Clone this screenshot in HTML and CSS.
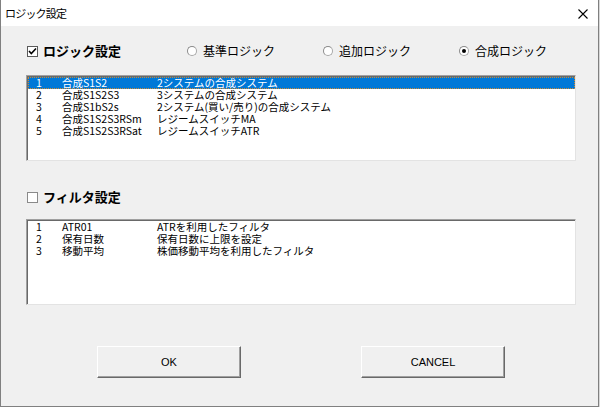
FILE: index.html
```html
<!DOCTYPE html>
<html lang="ja">
<head>
<meta charset="utf-8">
<title>ロジック設定</title>
<link rel="stylesheet" href="styles.css">
</head>
<body>
<div class="window">
  <div class="titlebar">
    <span class="title">ロジック設定</span>
    <span class="close">
      <svg width="10" height="10" viewBox="0 0 10 10"><path d="M0.5 0.5 L9.5 9.5 M9.5 0.5 L0.5 9.5" stroke="#000" stroke-width="1.1" fill="none"/></svg>
    </span>
  </div>
  <div class="content">
    <div class="header-row">
      <label class="check-label">
        <span class="checkbox checked">
          <svg width="9" height="9" viewBox="0 0 9 9"><path d="M1 4 L3.3 6.5 L8 1.5" stroke="#000" stroke-width="1.6" fill="none"/></svg>
        </span>
        <span class="section-title">ロジック設定</span>
      </label>
      <label class="radio-label"><span class="radio"></span><span>基準ロジック</span></label>
      <label class="radio-label"><span class="radio"></span><span>追加ロジック</span></label>
      <label class="radio-label"><span class="radio selected"></span><span>合成ロジック</span></label>
    </div>
    <div class="listbox logic-list">
      <div class="row selected"><span>1</span><span>合成S1S2</span><span>2システムの合成システム</span></div>
      <div class="row"><span>2</span><span>合成S1S2S3</span><span>3システムの合成システム</span></div>
      <div class="row"><span>3</span><span>合成S1bS2s</span><span>2システム(買い/売り)の合成システム</span></div>
      <div class="row"><span>4</span><span>合成S1S2S3RSm</span><span>レジームスイッチMA</span></div>
      <div class="row"><span>5</span><span>合成S1S2S3RSat</span><span>レジームスイッチATR</span></div>
    </div>
    <div class="header-row filter-row">
      <label class="check-label">
        <span class="checkbox"></span>
        <span class="section-title">フィルタ設定</span>
      </label>
    </div>
    <div class="listbox filter-list">
      <div class="row"><span>1</span><span>ATR01</span><span>ATRを利用したフィルタ</span></div>
      <div class="row"><span>2</span><span>保有日数</span><span>保有日数に上限を設定</span></div>
      <div class="row"><span>3</span><span>移動平均</span><span>株価移動平均を利用したフィルタ</span></div>
    </div>
    <div class="buttons">
      <button class="btn">OK</button>
      <button class="btn">CANCEL</button>
    </div>
  </div>
</div>
</body>
</html>
```
FILE: styles.css
```css
html, body {
  margin: 0;
  padding: 0;
}
body {
  width: 600px;
  height: 407px;
  background: #d8d8d8;
  font-family: "Noto Sans CJK JP", "Liberation Sans", sans-serif;
  color: #000;
  overflow: hidden;
}
.window {
  box-sizing: border-box;
  width: 599px;
  height: 407px;
  background: #f0f0f0;
  border: 1px solid #808080;
  border-top: none;
}
.titlebar {
  height: 26px;
  background: #fff;
  display: flex;
  align-items: center;
  padding-left: 4px;
}
.title {
  font-size: 11px;
  letter-spacing: -0.8px;
  line-height: 12px;
  margin-top: -1px;
}
.close {
  margin-left: auto;
  width: 10px;
  height: 10px;
  margin-right: 10px;
  margin-top: 1px;
  display: flex;
}
.content {
  padding-left: 25px;
}
.header-row {
  margin-top: 14px;
  height: 22px;
  display: grid;
  grid-template-columns: 160px 136px 136px 1fr;
  align-items: center;
  padding-left: 1px;
}
.check-label {
  display: flex;
  align-items: center;
  gap: 5px;
}
.checkbox {
  box-sizing: border-box;
  width: 11px;
  height: 11px;
  background: #fff;
  border: 1px solid #8a8a8a;
  display: flex;
  align-items: center;
  justify-content: center;
}
.checkbox.checked {
  border-color: #5a5a5a;
}
.section-title {
  font-size: 13px;
  font-weight: bold;
  line-height: 16px;
}
.radio-label {
  display: flex;
  align-items: center;
  gap: 6px;
  font-size: 12px;
  line-height: 16px;
}
.radio {
  box-sizing: border-box;
  width: 10px;
  height: 10px;
  border-radius: 50%;
  background: #fff;
  border: 1px solid #a8a8a8;
  border-top-color: #8a8a8a;
  border-left-color: #8a8a8a;
  position: relative;
}
.radio.selected::after {
  content: "";
  position: absolute;
  left: 2px;
  top: 2px;
  width: 4px;
  height: 4px;
  border-radius: 50%;
  background: #000;
}
.listbox {
  box-sizing: border-box;
  width: 550px;
  height: 86px;
  background: #fff;
  border-top: 1px solid #a0a0a0;
  border-left: 1px solid #a0a0a0;
  border-right: 1px solid #e3e3e3;
  border-bottom: 1px solid #e3e3e3;
  box-shadow: inset 1px 1px 0 #696969;
  padding: 1px 0 0 1px;
}
.logic-list {
  margin-top: 13px;
}
.filter-row {
  margin-top: 25px;
}
.filter-list {
  margin-top: 11px;
}
.row {
  box-sizing: border-box;
  height: 12px;
  display: grid;
  grid-template-columns: 26px 95px 1fr;
  padding-left: 8px;
  font-size: 10.5px;
  line-height: 12px;
  white-space: nowrap;
}
.row.selected {
  background: #0078d7;
  color: #fff;
  outline: 1px dotted #d08a30;
  outline-offset: -1px;
}
.buttons {
  margin-top: 41px;
  display: flex;
  gap: 120px;
  padding-left: 71px;
}
.btn {
  box-sizing: border-box;
  width: 144px;
  height: 32px;
  background: #f0f0f0;
  border: 1px solid #fff;
  border-right-color: #696969;
  border-bottom-color: #696969;
  box-shadow: inset -1px -1px 0 #a0a0a0;
  font-family: "Liberation Sans", sans-serif;
  font-size: 11px;
  color: #000;
  padding: 0;
}
```
